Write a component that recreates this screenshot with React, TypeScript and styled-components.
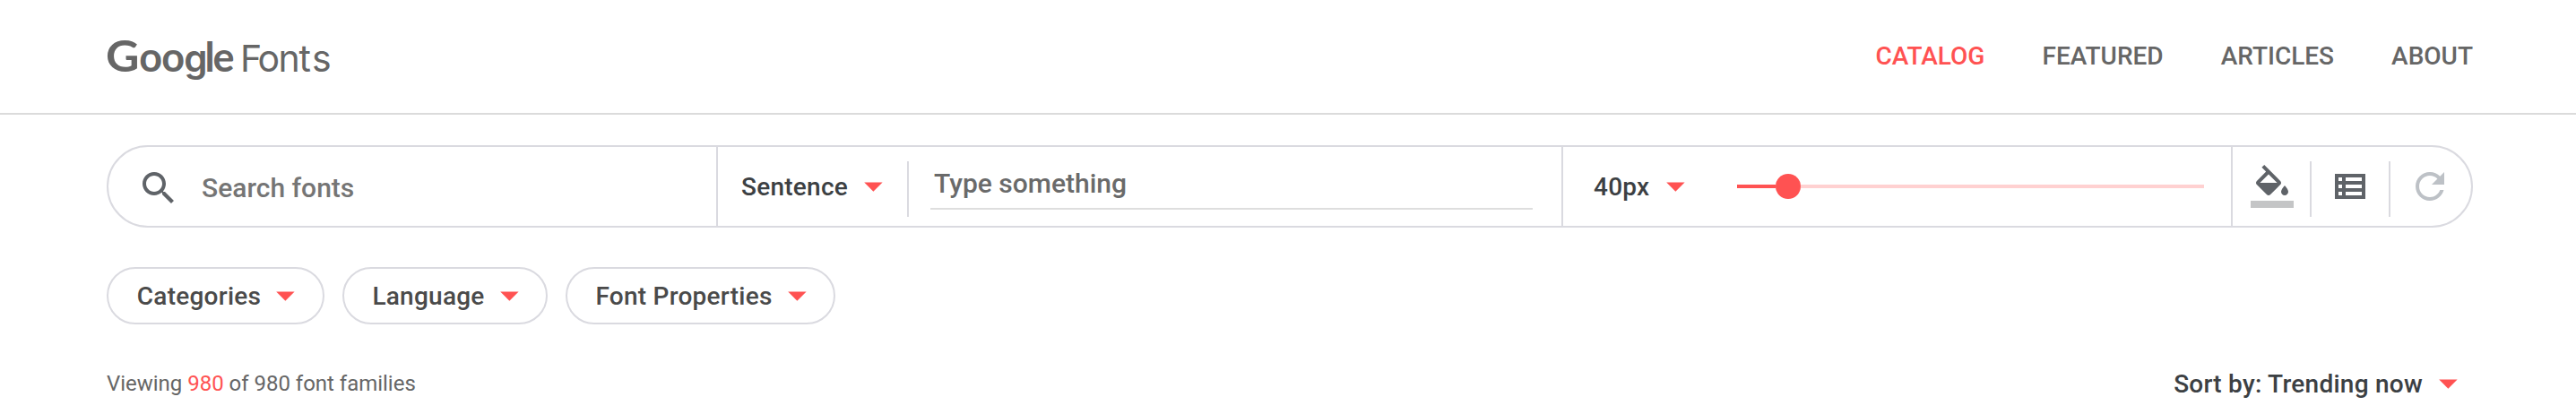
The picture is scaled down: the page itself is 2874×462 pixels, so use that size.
import React from 'react';
import styled, { createGlobalStyle } from 'styled-components';

const colors = {
  accent: '#ff5252',
  accentSoft: '#ffd1d1',
  line: '#dadae0',
  icon: '#5f6368',
  iconDisabled: '#bdc1c6',
  dark: '#3c4043',
  grey: '#666666',
};

const GlobalStyle = createGlobalStyle`
  *, *::before, *::after { box-sizing: border-box; }
  body {
    margin: 0;
    background: #fff;
    color: ${colors.grey};
    font-family: Roboto, "Liberation Sans", sans-serif;
  }
  svg { display: block; flex: none; }
`;

const Header = styled.header`
  display: flex;
  justify-content: space-between;
  height: 128px;
  padding: 0 115px;
  border-bottom: 2px solid #dbdbdb;
`;

const Logo = styled.svg`
  margin-top: 24px;
  overflow: visible;
  font-family: Inter, sans-serif;
  fill: ${colors.grey};
`;

const Nav = styled.nav`
  display: flex;
  gap: 64px;
  height: 125px;
`;

const NavLink = styled.a<{ $active?: boolean }>`
  font-size: 28px;
  font-weight: 500;
  line-height: 125px;
  color: ${({ $active }) => ($active ? colors.accent : colors.grey)};
`;

const Page = styled.main`
  padding: 34px 115px 0 119px;
`;

const Toolbar = styled.section`
  display: flex;
  height: 92px;
  border: 2px solid ${colors.line};
  border-radius: 46px;
`;

const SearchCell = styled.div`
  display: flex;
  align-items: center;
  gap: 24px;
  width: 678px;
  padding: 4px 0 0 32px;
`;

const Placeholder = styled.span`
  font-size: 30px;
  font-weight: 500;
  line-height: 36px;
  color: #757575;
`;

const Cell = styled.div<{ $width: number; $left: number; $right: number }>`
  display: flex;
  align-items: center;
  width: ${({ $width }) => $width}px;
  padding: 0 ${({ $right }) => $right}px 0 ${({ $left }) => $left}px;
  border-left: 2px solid ${colors.line};
`;

const Select = styled.div<{ $gap: number; $color?: string }>`
  display: flex;
  flex: none;
  align-items: center;
  gap: ${({ $gap }) => $gap}px;
  font-size: 28px;
  font-weight: 500;
  line-height: 33px;
  letter-spacing: 0.25px;
  white-space: nowrap;
  color: ${({ $color }) => $color ?? colors.dark};
`;

const Separator = styled.div<{ $left?: number }>`
  flex: none;
  width: 2px;
  height: 62px;
  margin-left: ${({ $left }) => $left ?? 0}px;
  margin-bottom: -6px;
  background: ${colors.line};
`;

const SampleInput = styled.div`
  flex: 1;
  height: 52px;
  margin-left: 24px;
  padding: 5px 0 0 4px;
  border-bottom: 2px solid #dedede;
  font-size: 30px;
  font-weight: 500;
  line-height: 36px;
  color: #6a6a6a;
`;

const Track = styled.div`
  display: flex;
  align-items: center;
  width: 521px;
  height: 28px;
  margin-left: auto;
`;

const Filled = styled.div`
  width: 43px;
  height: 4px;
  background: ${colors.accent};
`;

const Thumb = styled.div`
  width: 28px;
  height: 28px;
  border-radius: 50%;
  background: ${colors.accent};
`;

const Rest = styled.div`
  flex: 1;
  height: 4px;
  background: ${colors.accentSoft};
`;

const ToolButton = styled.div<{ $left: number; $width: number }>`
  display: flex;
  flex: none;
  align-items: center;
  width: ${({ $width }) => $width}px;
  padding-left: ${({ $left }) => $left}px;
`;

const Filters = styled.section`
  display: flex;
  gap: 20px;
  margin-top: 44px;
`;

const Chip = styled.div<{ $width: number }>`
  display: flex;
  align-items: center;
  justify-content: center;
  width: ${({ $width }) => $width}px;
  height: 64px;
  padding-left: 1px;
  border: 2px solid ${colors.line};
  border-radius: 32px;
`;

const Summary = styled.section`
  display: flex;
  justify-content: space-between;
  height: 34px;
  margin-top: 49px;
  padding-right: 17px;
`;

const Count = styled.p`
  margin: 0;
  font-size: 24px;
  line-height: 34px;
  letter-spacing: -0.02px;
`;

const Highlight = styled.span`
  color: ${colors.accent};
`;

const Caret = () => (
  <svg width="21" height="11" viewBox="0 0 21 11" fill={colors.accent}>
    <path d="M.2.6h20.4L10.4 10.8z" />
  </svg>
);

const chips = [
  { label: 'Categories', width: 243 },
  { label: 'Language', width: 229 },
  { label: 'Font Properties', width: 301 },
];

export default function App() {
  return (
    <>
      <GlobalStyle />
      <Header>
        <Logo width="260" height="84" viewBox="0 0 260 84">
          <text x="3" y="56" fontFamily="Lato" fontSize="48" fontWeight="700" textLength="37.5" lengthAdjust="spacingAndGlyphs">G</text>
          <text y="56" fontFamily="Lato" fontSize="45" fontWeight="700">
            <tspan x="40.3 65.3">oo</tspan>
            <tspan x="90.3" fontFamily="Inter" fontSize="42" fontWeight="600">g</tspan>
            <tspan x="113.6 122.4">le</tspan>
          </text>
          <text y="56" x="153 172.6 195.6 218.5 233" fontSize="41" fontWeight="400">Fonts</text>
        </Logo>
        <Nav>
          <NavLink $active>CATALOG</NavLink>
          <NavLink>FEATURED</NavLink>
          <NavLink>ARTICLES</NavLink>
          <NavLink>ABOUT</NavLink>
        </Nav>
      </Header>
      <Page>
        <Toolbar>
          <SearchCell>
            <svg width="48" height="48" viewBox="0 0 24 24" fill={colors.icon}>
              <path d="M15.5 14h-.79l-.28-.27C15.41 12.59 16 11.11 16 9.5 16 5.91 13.09 3 9.5 3S3 5.91 3 9.5 5.91 16 9.5 16c1.61 0 3.09-.59 4.23-1.57l.27.28v.79l5 4.99L20.49 19l-4.99-5zm-6 0C7.01 14 5 11.99 5 9.5S7.01 5 9.5 5 14 7.01 14 9.5 11.99 14 9.5 14z" />
            </svg>
            <Placeholder>Search fonts</Placeholder>
          </SearchCell>
          <Cell $width={943} $left={26} $right={32}>
            <Select $gap={18}>
              <span>Sentence</span>
              <Caret />
            </Select>
            <Separator $left={27} />
            <SampleInput>Type something</SampleInput>
          </Cell>
          <Cell $width={747} $left={34} $right={30}>
            <Select $gap={19}>
              <span>40px</span>
              <Caret />
            </Select>
            <Track>
              <Filled />
              <Thumb />
              <Rest />
            </Track>
          </Cell>
          <Cell $width={268} $left={0} $right={0}>
            <ToolButton $left={20} $width={86}>
              <svg width="48" height="48" viewBox="0 0 24 24" fill={colors.icon}>
                <path d="M16.56 8.94L7.62 0 6.21 1.41l2.38 2.38-5.15 5.15c-.59.59-.59 1.54 0 2.12l5.5 5.5c.29.29.68.44 1.06.44s.77-.15 1.06-.44l5.5-5.5c.59-.58.59-1.53 0-2.12zM5.21 10L10 5.21 14.79 10H5.21zM19 11.5s-2 2.17-2 3.5c0 1.1.9 2 2 2s2-.9 2-2c0-1.33-2-3.5-2-3.5z" />
                <path fill="#c4c5c6" d="M0 20h24v4H0z" />
              </svg>
            </ToolButton>
            <Separator />
            <ToolButton $left={26} $width={86}>
              <svg width="34" height="28" viewBox="0 0 34 28" fill={colors.icon} fillRule="evenodd">
                <path d="M0 0h34v28H0zM4 4v4h4V4zM12 4v4h18V4zM4 12v4h4v-4zM12 12v4h18v-4zM4 20v4h4v-4zM12 20v4h18v-4z" />
              </svg>
            </ToolButton>
            <Separator />
            <ToolButton $left={20} $width={88}>
              <svg width="48" height="48" viewBox="0 0 24 24" fill={colors.iconDisabled}>
                <path d="M17.65 6.35C16.2 4.9 14.21 4 12 4c-4.42 0-7.99 3.58-7.99 8s3.57 8 7.99 8c3.73 0 6.84-2.55 7.73-6h-2.08c-.82 2.33-3.04 4-5.65 4-3.31 0-6-2.69-6-6s2.69-6 6-6c1.66 0 3.14.69 4.22 1.78L13 11h7V4l-2.35 2.35z" />
              </svg>
            </ToolButton>
          </Cell>
        </Toolbar>
        <Filters>
          {chips.map(({ label, width }) => (
            <Chip key={label} $width={width}>
              <Select $gap={17} $color="#4a4a4a">
                <span>{label}</span>
                <Caret />
              </Select>
            </Chip>
          ))}
        </Filters>
        <Summary>
          <Count>
            Viewing <Highlight>980</Highlight> of 980 font families
          </Count>
          <Select $gap={18}>
            <span>Sort by: Trending now</span>
            <Caret />
          </Select>
        </Summary>
      </Page>
    </>
  );
}
